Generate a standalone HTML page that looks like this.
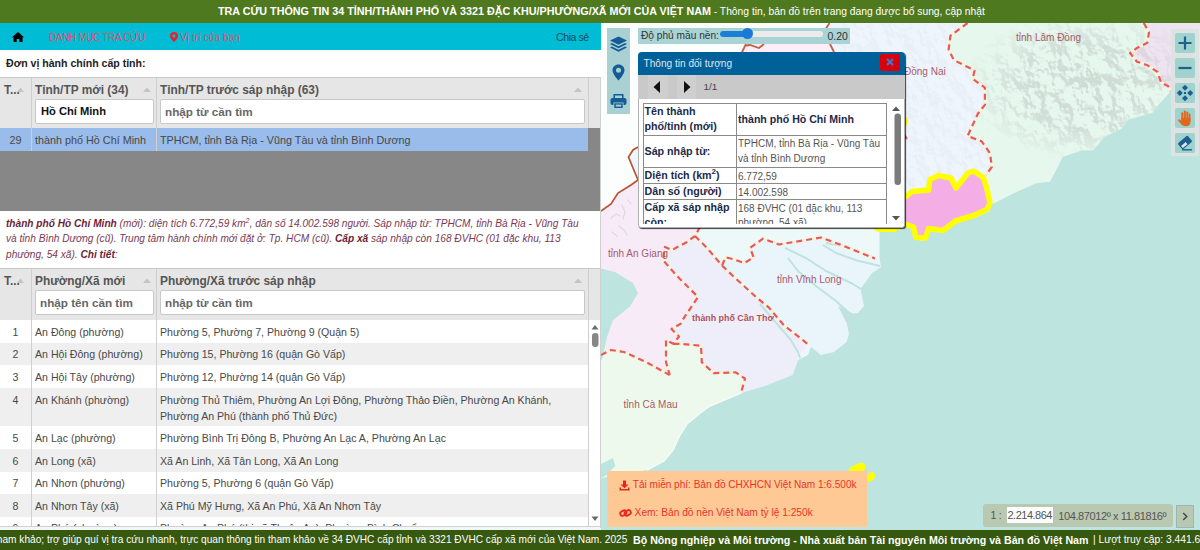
<!DOCTYPE html>
<html><head><meta charset="utf-8">
<style>
*{box-sizing:border-box;margin:0;padding:0}
html,body{width:1200px;height:550px;overflow:hidden;background:#fff;font-family:"Liberation Sans",sans-serif;font-size:13px;color:#333}
.a{position:absolute;white-space:nowrap}
#hdr{left:0;top:0;width:1200px;height:23px;background:#4f791e;color:#fff;font-size:10.3px;line-height:23px;padding-left:218px}
#hdr b{font-size:10.75px}
#nav{left:0;top:23px;width:601px;height:27px;background:#00bcd5}
.nv{top:24px;line-height:27px;color:#e64c6a}
.th{background:#e6e6e6}
.inp{background:#fff;border:1px solid #c8c8c8;border-radius:2px;height:25px;line-height:23px;padding-left:4px;font-weight:bold;font-size:11.7px;color:#666}
.hd{font-weight:bold;color:#555;font-size:11.9px;line-height:16px}
.cell{font-size:10.6px;color:#484848;line-height:16px}
#ftr{left:0;top:530px;width:1200px;height:20px;background:#37580f;color:#fff;line-height:20px;overflow:hidden}
.desc{left:6px;font-size:10.15px;color:#7a3a55;font-style:italic;line-height:15.3px}
.desc b{color:#6b1f3a}
#map{left:601px;top:23px;width:599px;height:507px;overflow:hidden;background:#eef5fd}
.ptl{font-weight:bold;color:#1c2a4a;font-size:10.7px;line-height:16px}
.pvl{color:#555;font-size:10px;line-height:16px}
.lbl{color:#a85a6a;font-size:10px;line-height:12px}
.tbtn{left:1175px;width:20px;height:20px;background:#a0d3cd;border-radius:2px}

</style></head><body>
<div id="hdr" class="a"><b>TRA CỨU THÔNG TIN 34 TỈNH/THÀNH PHỐ VÀ 3321 ĐẶC KHU/PHƯỜNG/XÃ MỚI CỦA VIỆT NAM</b> - Thông tin, bản đồ trên trang đang được bổ sung, cập nhật</div>
<!-- NAV -->
<div id="nav" class="a"></div>
<svg class="a" style="left:12px;top:32px" width="12" height="10" viewBox="0 0 12 10"><path d="M6 0 L12 5.2 L10.5 5.2 L10.5 10 L7.3 10 L7.3 7 L4.7 7 L4.7 10 L1.5 10 L1.5 5.2 L0 5.2 Z" fill="#000"/></svg>
<div class="a nv" style="left:49px;font-size:10px;letter-spacing:-0.35px">DANH MỤC TRA CỨU</div>
<svg class="a" style="left:170px;top:32px" width="8" height="10" viewBox="0 0 8 10"><path d="M4 0 C1.8 0 0 1.7 0 3.9 C0 6.5 4 10 4 10 C4 10 8 6.5 8 3.9 C8 1.7 6.2 0 4 0 Z M4 2.3 A1.6 1.6 0 1 1 4 5.5 A1.6 1.6 0 1 1 4 2.3 Z" fill="#e8202a" fill-rule="evenodd"/></svg>
<div class="a nv" style="left:180px;font-size:10.2px">Vị trí của bạn</div>
<div class="a nv" style="left:556px;color:#174e5e;font-size:10.6px;letter-spacing:-0.45px">Chia sẻ</div>

<div class="a" style="left:6px;top:55px;font-weight:bold;font-size:10.57px;color:#222;line-height:16px">Đơn vị hành chính cấp tỉnh:</div>

<!-- TABLE 1 -->
<div class="a th" style="left:0;top:77px;width:601px;height:51px;border-top:1px solid #c8c8c8"></div>
<div class="a" style="left:0;top:128px;width:588px;height:23px;background:#99bcea"></div>
<div class="a" style="left:31px;top:78px;width:1px;height:73px;background:#cfcfcf"></div>
<div class="a" style="left:156px;top:78px;width:1px;height:73px;background:#cfcfcf"></div>
<div class="a" style="left:588px;top:78px;width:1px;height:50px;background:#cfcfcf"></div>
<div class="a hd" style="left:4px;top:82px">T...</div>
<svg class="a" style="left:17px;top:86.5px" width="7" height="5" viewBox="0 0 7 5"><path d="M0 5 L3.5 0.5 L7 5 Z" fill="#c4c4c4"/></svg>
<svg class="a" style="left:142.5px;top:86.5px" width="8" height="5" viewBox="0 0 8 5"><path d="M0 5 L4 0.5 L8 5 Z" fill="#c4c4c4"/></svg>
<svg class="a" style="left:573.5px;top:86.5px" width="8" height="5" viewBox="0 0 8 5"><path d="M0 5 L4 0.5 L8 5 Z" fill="#c4c4c4"/></svg>

<div class="a hd" style="left:35px;top:82px">Tỉnh/TP mới (34)</div>
<div class="a hd" style="left:160px;top:82px">Tỉnh/TP trước sáp nhập (63)</div>
<div class="a inp" style="left:35px;top:99px;width:119px;color:#111;font-size:11.15px;padding-left:5px">Hồ Chí Minh</div>
<div class="a inp" style="left:160px;top:99px;width:425px">nhập từ cần tìm</div>
<div class="a cell" style="left:0;top:132px;width:31px;text-align:center;font-size:10.8px">29</div>
<div class="a cell" style="left:35px;top:132px;font-size:10.8px">thành phố Hồ Chí Minh</div>
<div class="a cell" style="left:160px;top:132px;font-size:10.8px">TPHCM, tỉnh Bà Rịa - Vũng Tàu và tỉnh Bình Dương</div>
<div class="a" style="left:0;top:151px;width:601px;height:60px;background:#878787"></div>
<div class="a" style="left:588px;top:128px;width:13px;height:23px;background:#878787"></div>

<!-- DESCRIPTION -->
<div class="a desc" style="top:216px"><b>thành phố Hồ Chí Minh</b> (mới): diện tích 6.772,59 km<sup style="font-size:7px;line-height:0">2</sup>, dân số 14.002.598 người. Sáp nhập từ: TPHCM, tỉnh Bà Rịa - Vũng Tàu<br>và tỉnh Bình Dương (cũ). Trung tâm hành chính mới đặt ở: Tp. HCM (cũ). <b>Cấp xã</b> sáp nhập còn 168 ĐVHC (01 đặc khu, 113<br>phường, 54 xã). <b>Chi tiết</b>:</div>

<!-- TABLE 2 -->
<div class="a th" style="left:0;top:268px;width:601px;height:52px;border-top:1px solid #c8c8c8"></div>
<div class="a hd" style="left:4px;top:273px">T...</div>
<svg class="a" style="left:17px;top:277.5px" width="7" height="5" viewBox="0 0 7 5"><path d="M0 5 L3.5 0.5 L7 5 Z" fill="#c4c4c4"/></svg>
<svg class="a" style="left:142.5px;top:277.5px" width="8" height="5" viewBox="0 0 8 5"><path d="M0 5 L4 0.5 L8 5 Z" fill="#c4c4c4"/></svg>
<svg class="a" style="left:573.5px;top:277.5px" width="8" height="5" viewBox="0 0 8 5"><path d="M0 5 L4 0.5 L8 5 Z" fill="#c4c4c4"/></svg>

<div class="a hd" style="left:35px;top:273px">Phường/Xã mới</div>
<div class="a hd" style="left:160px;top:273px">Phường/Xã trước sáp nhập</div>
<div class="a inp" style="left:35px;top:290px;width:119px">nhập tên cần tìm</div>
<div class="a inp" style="left:160px;top:290px;width:425px">nhập từ cần tìm</div>
<div class="a" style="left:0;top:320px;width:601px;height:206px;overflow:hidden">
<div class="a" style="left:0;top:-320px;width:601px;height:600px">
<div class="a" style="left:0;top:320.00px;width:588px;height:23.05px;background:#fff"></div>
<div class="a cell" style="left:0;top:323.60px;width:31px;text-align:center">1</div>
<div class="a cell" style="left:35px;top:323.60px">An Đông (phường)</div>
<div class="a cell" style="left:160px;top:323.60px">Phường 5, Phường 7, Phường 9 (Quận 5)</div>
<div class="a" style="left:0;top:342.65px;width:588px;height:23.05px;background:#efefef"></div>
<div class="a cell" style="left:0;top:346.25px;width:31px;text-align:center">2</div>
<div class="a cell" style="left:35px;top:346.25px">An Hội Đông (phường)</div>
<div class="a cell" style="left:160px;top:346.25px">Phường 15, Phường 16 (quận Gò Vấp)</div>
<div class="a" style="left:0;top:365.30px;width:588px;height:23.05px;background:#fff"></div>
<div class="a cell" style="left:0;top:368.90px;width:31px;text-align:center">3</div>
<div class="a cell" style="left:35px;top:368.90px">An Hội Tây (phường)</div>
<div class="a cell" style="left:160px;top:368.90px">Phường 12, Phường 14 (quận Gò Vấp)</div>
<div class="a" style="left:0;top:387.95px;width:588px;height:38.70px;background:#efefef"></div>
<div class="a cell" style="left:0;top:391.55px;width:31px;text-align:center">4</div>
<div class="a cell" style="left:35px;top:391.55px">An Khánh (phường)</div>
<div class="a cell" style="left:160px;top:391.55px">Phường Thủ Thiêm, Phường An Lợi Đông, Phường Thảo Điền, Phường An Khánh,<br>Phường An Phú (thành phố Thủ Đức)</div>
<div class="a" style="left:0;top:426.25px;width:588px;height:23.05px;background:#fff"></div>
<div class="a cell" style="left:0;top:429.85px;width:31px;text-align:center">5</div>
<div class="a cell" style="left:35px;top:429.85px">An Lạc (phường)</div>
<div class="a cell" style="left:160px;top:429.85px">Phường Bình Trị Đông B, Phường An Lạc A, Phường An Lạc</div>
<div class="a" style="left:0;top:448.90px;width:588px;height:23.05px;background:#efefef"></div>
<div class="a cell" style="left:0;top:452.50px;width:31px;text-align:center">6</div>
<div class="a cell" style="left:35px;top:452.50px">An Long (xã)</div>
<div class="a cell" style="left:160px;top:452.50px">Xã An Linh, Xã Tân Long, Xã An Long</div>
<div class="a" style="left:0;top:471.55px;width:588px;height:23.05px;background:#fff"></div>
<div class="a cell" style="left:0;top:475.15px;width:31px;text-align:center">7</div>
<div class="a cell" style="left:35px;top:475.15px">An Nhơn (phường)</div>
<div class="a cell" style="left:160px;top:475.15px">Phường 5, Phường 6 (quận Gò Vấp)</div>
<div class="a" style="left:0;top:494.20px;width:588px;height:23.05px;background:#efefef"></div>
<div class="a cell" style="left:0;top:497.80px;width:31px;text-align:center">8</div>
<div class="a cell" style="left:35px;top:497.80px">An Nhơn Tây (xã)</div>
<div class="a cell" style="left:160px;top:497.80px">Xã Phú Mỹ Hưng, Xã An Phú, Xã An Nhơn Tây</div>
<div class="a" style="left:0;top:516.85px;width:588px;height:23.05px;background:#fff"></div>
<div class="a cell" style="left:0;top:520.45px;width:31px;text-align:center">9</div>
<div class="a cell" style="left:35px;top:520.45px">An Phú (phường)</div>
<div class="a cell" style="left:160px;top:520.45px">Phường An Phú (thị xã Thuận An), Phường Bình Chuẩn</div>
</div></div>
<div class="a" style="left:31px;top:269px;width:1px;height:258px;background:#cfcfcf"></div>
<div class="a" style="left:156px;top:269px;width:1px;height:258px;background:#cfcfcf"></div>
<div class="a" style="left:588px;top:269px;width:1px;height:258px;background:#cfcfcf"></div>
<div class="a" style="left:589px;top:320px;width:12px;height:206px;background:#fff"></div>
<svg class="a" style="left:589px;top:319px" width="12" height="208" viewBox="0 0 12 208">
<path d="M2.5 10.5 L6 6 L9.5 10.5 Z" fill="#6a6a6a"/>
<rect x="3" y="14" width="6.5" height="14" rx="3" fill="#878787"/>
<path d="M2.5 197.5 L6 202 L9.5 197.5 Z" fill="#6a6a6a"/>
</svg>
<div class="a" style="left:0;top:526px;width:601px;height:1px;background:#d0d0d0"></div>
<div class="a" style="left:0;top:527px;width:601px;height:3px;background:#f1f7fb"></div>
<div class="a" style="left:600px;top:77px;width:1px;height:451px;background:#d0d0d0"></div>

<!-- MAP -->
<div id="map" class="a">
<svg width="599" height="507" viewBox="601 23 599 507" style="position:absolute;left:0;top:0">
<defs>
<filter id="hs" x="940" y="23" width="260" height="200" filterUnits="userSpaceOnUse">
<feTurbulence type="fractalNoise" baseFrequency="0.07 0.05" numOctaves="4" seed="11" result="n"/>
<feDiffuseLighting in="n" surfaceScale="9" diffuseConstant="1" lighting-color="#ffffff" result="l"><feDistantLight azimuth="300" elevation="40"/></feDiffuseLighting>
<feColorMatrix in="l" type="matrix" values="0 0 0 0 0.52  0 0 0 0 0.58  0 0 0 0 0.55  -2.3 0 0 0 1.6" result="c"/>
<feComposite in="c" in2="SourceGraphic" operator="in"/>
</filter>
<filter id="hs2" x="830" y="23" width="170" height="170" filterUnits="userSpaceOnUse">
<feTurbulence type="fractalNoise" baseFrequency="0.09 0.06" numOctaves="4" seed="5" result="n"/>
<feDiffuseLighting in="n" surfaceScale="7" diffuseConstant="1" lighting-color="#ffffff" result="l"><feDistantLight azimuth="300" elevation="40"/></feDiffuseLighting>
<feColorMatrix in="l" type="matrix" values="0 0 0 0 0.55  0 0 0 0 0.58  0 0 0 0 0.62  -2.3 0 0 0 1.6" result="c"/>
<feComposite in="c" in2="SourceGraphic" operator="in"/>
</filter>
</defs>
<rect x="601" y="23" width="599" height="505" fill="#eef5fd"/>
<!-- Cambodia -->
<path d="M601,23 L829.5,23 L826,28.5 L830,44 L746,44 L742,52 L638,52 L638,147 L633,150 L628.5,157 L633,168 L638,180 L631,185 L618,193 L611,204 L601,211 Z" fill="#fcfdfd"/>
<!-- Tay Ninh top -->
<path d="M742,52 L746,44 L830,44 L834,52 Z" fill="#fbeef9"/>
<!-- An Giang -->
<path d="M601,211 L611,204 L618,193 L631,185 L638,180 L638,227 L700,227 L695,236 L687,242 L672,250 L665,247 L663,260 L677,276 L698,297 L682.5,320 L680.7,323.7 L671.5,329 L679,336.5 L673.4,343.8 L666,340 L666,362 L669.7,375 L646,362 L624,352 L611,350 L601,355 Z" fill="#f8ebf8"/>
<!-- Can Tho -->
<path d="M695,236 L707,248 L723,265.5 L733,276 L756,297 L769,307.6 L783.6,325 L807,345.5 L798,357 L794.5,369.5 L792.6,375 L765,386 L741,393 L745,378.7 L735.8,372.3 L713.7,373.2 L701.8,362.2 L701,345.7 L680.7,343.8 L673.4,343.8 L679,336.5 L671.5,329 L680.7,323.7 L682.5,320 L698,297 L677,276 L663,260 L665,247 L672,250 L687,242 Z" fill="#eeeefa"/>
<!-- Dong Thap -->
<path d="M700,227 L880,227 L879.6,229 L876.7,258 L875,258.5 L840,244.5 L821,237.5 L779,244.5 L763,238.7 L750,248 L753.7,257.3 L744.3,263 L735,259.7 L725.7,257.3 L722,265.5 L707,248 L695,236 Z" fill="#edf8f9"/>
<!-- Vinh Long -->
<path d="M722,265.5 L725.7,257.3 L735,259.7 L744.3,263 L753.7,257.3 L750,248 L763,238.7 L779,244.5 L821,237.5 L840,244.5 L875,258.5 L879.6,258 L881,267 L872,273 L867,280 L860.5,289 L864,306 L858,313 L849,314 L846.5,322 L849,334 L846.5,342 L834,352 L821,355 L811,347 L808,344.6 L783.6,325 L769,307.6 L756,297 L733,276 Z" fill="#e9f5fb"/>
<!-- Ca Mau -->
<path d="M601,355 L611,350 L624,352 L646,362 L669.7,375 L666,362 L666,340 L673.4,343.8 L680.7,343.8 L701,345.7 L701.8,362.2 L713.7,373.2 L735.8,372.3 L745,378.7 L741,393 L732,400 L710,406 L699,414 L687,424 L680,435 L673,450 L664,461 L647,470 L620,475 L601,478 Z" fill="#eef9ed"/>
<!-- Lam Dong -->
<path d="M967.6,23 L1143.8,23 L1149,32.4 L1147.3,42.7 L1137,48 L1130,53 L1137,61.7 L1147.3,65.2 L1157.6,72 L1161,82.4 L1168,86 L1171,91 L1158.8,104.4 L1152.3,113.1 L1128.3,119.6 L1121.8,128.4 L1104.3,137.1 L1093.4,150.2 L1082.5,150.2 L1062.9,156.7 L1056.3,169.8 L1049.8,181.8 L1036.7,182.9 L1012.7,193.8 L991,204.7 L989,186 L986,175 L991.8,167 L990,153.3 L981.5,141.2 L967.6,136 L978,113.5 L984.9,104.9 L984.9,87.6 L972.8,79 L974.5,70.4 L967.6,67 L953.8,60 L948.6,49.6 L950.4,35.8 Z" fill="#e6f8ee"/>
<!-- Khanh Hoa -->
<path d="M1143.8,23 L1200,23 L1200,82 L1171,91 L1168,86 L1161,82.4 L1157.6,72 L1147.3,65.2 L1137,61.7 L1130,53 L1137,48 L1147.3,42.7 L1149,32.4 Z" fill="#eee3f1"/>
<!-- hillshade -->
<defs>
<radialGradient id="hg" cx="1085" cy="85" r="125" gradientUnits="userSpaceOnUse" gradientTransform="translate(1075 88) scale(1 0.62) translate(-1075 -88)">
<stop offset="0" stop-color="#fff" stop-opacity="1"/>
<stop offset="0.55" stop-color="#fff" stop-opacity="0.85"/>
<stop offset="1" stop-color="#fff" stop-opacity="0"/>
</radialGradient>
<mask id="hm" maskUnits="userSpaceOnUse" x="940" y="23" width="260" height="200"><rect x="940" y="23" width="260" height="200" fill="url(#hg)"/></mask>
</defs>
<g mask="url(#hm)" opacity="0.6">
<path d="M967.6,23 L1200,23 L1200,82 L1171,91 L1158.8,104.4 L1152.3,113.1 L1128.3,119.6 L1121.8,128.4 L1104.3,137.1 L1093.4,150.2 L1082.5,150.2 L1062.9,156.7 L1056.3,169.8 L1049.8,181.8 L1036.7,182.9 L1012.7,193.8 L991,204.7 L989,186 L986,175 L991.8,167 L990,153.3 L981.5,141.2 L967.6,136 L978,113.5 L984.9,104.9 L984.9,87.6 L972.8,79 L974.5,70.4 L967.6,67 L953.8,60 L948.6,49.6 L950.4,35.8 Z" filter="url(#hs)" fill="#000"/>
</g>
<g opacity="0.12">
<path d="M834,23 L967.6,23 L950.4,35.8 L948.6,49.6 L953.8,60 L967.6,67 L974.5,70.4 L972.8,79 L984.9,87.6 L984.9,104.9 L978,113.5 L967.6,136 L981.5,141.2 L990,153.3 L991.8,167 L986,175 L960,180 L905,190 L905,52 L834,52 Z" filter="url(#hs2)" fill="#000"/>
</g>
<!-- Sea -->
<path d="M601,478 L620,475 L647,470 L664,461 L673,450 L680,435 L687,424 L699,414 L710,406 L741,393 L765,386 L792.6,375 L798,360 L808,355 L811,347 L821,355 L834,352 L846.5,342 L849,334 L846.5,322 L849,314 L858,313 L864,306 L860.5,289 L867,280 L872,273 L881,267 L879.6,258 L879.6,229 L900,227 L905,224 L914,228 L916,239 L923,241 L927,230 L943,233 L956,223 L974,218 L989,212 L991,204.7 L1012.7,193.8 L1036.7,182.9 L1049.8,181.8 L1056.3,169.8 L1062.9,156.7 L1082.5,150.2 L1093.4,150.2 L1104.3,137.1 L1121.8,128.4 L1128.3,119.6 L1152.3,113.1 L1158.8,104.4 L1171,91 L1200,82 L1200,530 L601,530 Z" fill="#bde4df"/>
<path d="M601,268.5 L615,272 L633,283 L638,293 L630,306.5 L613,320 L607,337 L602.5,358 L601,360 Z" fill="#bde4df"/>
<path d="M601,464 L613,458 L615.4,466 L605,476 L601,478 Z" fill="#bde4df"/>
<!-- coast white rim -->
<path d="M647,470 L664,461 L673,450 L680,435 L687,424 L699,414 L710,406 L741,393" fill="none" stroke="#f6fbf8" stroke-width="1.5"/>
<!-- Vinh Long channels -->
<g fill="none" stroke="#bfe2e0" stroke-width="2" stroke-linejoin="round">
<path d="M785,248 L806,258 L826,271 L852,283.5 L861,289"/>
<path d="M788,258 L798,271 L816,286 L836,301 L849,313"/>
<path d="M823,245 L836,253 L857,260.5 L880,266"/>
<path d="M760,304 L775,321.7 L790.5,339.5 L798,352 L800,358"/>
<path d="M826,243 L849,247"/>
</g>
<path d="M838,306 L852,313 L856,321 L846,322 Z" fill="#bfe2e0"/>
<!-- HCM -->
<path d="M880,212 L906,196.5 L912,191.5 L928.5,190 L930,179.5 L938.5,175.5 L951,178 L956,188 L968,173 L973.5,171 L983.5,177.5 L986.5,187.5 L990,202.5 L987,209.5 L973.5,215.5 L955.5,221 L943,230.5 L928.5,228.5 L925.5,238 L916,237.5 L913.5,227 L905,224 L893,229.5 L878,229 L870,222 Z" fill="#f5ade6" stroke="#ffff00" stroke-width="5.5" stroke-linejoin="round"/>
<path d="M903,117 C907,116 908.5,119 908,122 C907.5,125 906,127 903,127 Z" fill="#ffff00"/>
<path d="M904,134 L907,139" stroke="#e65f62" stroke-width="2"/>
<g fill="none" stroke="#e0d6e2" stroke-width="1.2" stroke-linecap="round">
<path d="M611,218 L616,214 L620,216"/><path d="M622,205 L625,212 L623,219"/><path d="M619,226 L624,230 L627,235"/><path d="M612,232 L617,236"/><path d="M628,200 L631,204"/>
</g>
<!-- Con Dao -->
<g fill="#ffff00">
<path d="M848.5,472 C848.5,467.5 852.5,465.5 856.5,464.8 C858.5,462.5 863.5,461.8 865,465 C866.2,468.5 864,472 860,472 Z"/>
<path d="M867.3,480 C866.8,476 868.8,472.3 871.8,472 C875,471.8 875.8,475.8 874.3,478 C872.8,480.2 871.3,482 868.5,481.7 Z"/>
</g>
<!-- province boundaries -->
<g fill="none" stroke-linejoin="round" stroke-linecap="butt">
<g stroke="#f5f3d8" stroke-width="3">
<path id="b1" d="M967.6,23 L950.4,35.8 L948.6,49.6 L953.8,60 L967.6,67 L974.5,70.4 L972.8,79 L984.9,87.6 L984.9,104.9 L978,113.5 L967.6,136 L981.5,141.2 L990,153.3 L991.8,167 L986,175"/>
<path id="b2" d="M1143.8,23 L1149,32.4 L1147.3,42.7 L1137,48 L1130,53 L1137,61.7 L1147.3,65.2 L1157.6,72 L1161,82.4 L1168,86 L1171,91"/>
<path id="b3" d="M700,227 L695,236 L687,242 L672,250 L665,247 L663,260 L677,276 L698,297 L682.5,320 L680.7,323.7 L671.5,329 L679,336.5 L673.4,343.8 L666,340 L666,362 L669.7,375"/>
<path id="b4" d="M601,355 L611,350 L624,352 L646,362 L669.7,375"/>
<path id="b5" d="M673.4,343.8 L680.7,343.8 L701,345.7 L701.8,362.2 L713.7,373.2 L735.8,372.3 L745,378.7 L741,393"/>
<path id="b6" d="M695,236 L707,248 L722,265.5 L733,276 L756,297 L769,307.6 L783.6,325 L795.6,334.4 L808.3,344.6"/>
<path id="b7" d="M722,265.5 L725.7,257.3 L735,259.7 L744.3,263 L753.7,257.3 L750,248 L763,238.7 L779,244.5 L821,237.5 L840,244.5 L875,258.5"/>
</g>
<g stroke="#e8595e" stroke-width="2.2" stroke-dasharray="6 4">
<use href="#b1"/><use href="#b2"/><use href="#b3"/><use href="#b4"/><use href="#b5"/><use href="#b6"/><use href="#b7"/>
</g>
</g>
<!-- country border -->
<path d="M601,211 L611,204 L618,193 L631,185 L638,180 L633,168 L628.5,157 L633,150 L638,147" fill="none" stroke="#b8532e" stroke-width="1.7"/>
<path d="M742,52 L746,44 M746,45.5 L750,45 L759,48 L764,44 M829.5,23 L826,28.5 M830,44 L834,52" fill="none" stroke="#c0603e" stroke-width="1.8"/>
</svg>
<div class="a lbl" style="left:415px;top:9px">tỉnh Lâm Đồng</div>
<div class="a lbl" style="left:303px;top:43px">Đồng Nai</div>
<div class="a lbl" style="left:7px;top:225px">tỉnh An Giang</div>
<div class="a lbl" style="left:176px;top:251px">tỉnh Vĩnh Long</div>
<div class="a lbl" style="left:91px;top:289px;font-weight:bold;font-size:8.9px;color:#b0525a">thành phố Cần Thơ</div>
<div class="a lbl" style="left:22.6px;top:376px">tỉnh Cà Mau</div>

</div>

<!-- LEFT MAP TOOLBAR -->
<div class="a" style="left:607px;top:28px;width:23px;height:86px;background:#a9d0d2"></div>
<svg class="a" style="left:609px;top:36px" width="19" height="17" viewBox="0 0 19 17">
<path d="M9.5 0.5 L18 4.6 L9.5 8.7 L1 4.6 Z" fill="#135c94"/>
<path d="M1 8 L3 7 L9.5 10.2 L16 7 L18 8 L9.5 12.2 Z" fill="#135c94"/>
<path d="M1 11.6 L3 10.6 L9.5 13.8 L16 10.6 L18 11.6 L9.5 15.8 Z" fill="#135c94"/>
</svg>
<svg class="a" style="left:612px;top:63.5px" width="13" height="17" viewBox="0 0 13 17"><path d="M6.5 0.5 C3 0.5 0.5 3 0.5 6.3 C0.5 10.5 6.5 16.5 6.5 16.5 C6.5 16.5 12.5 10.5 12.5 6.3 C12.5 3 10 0.5 6.5 0.5 Z M6.5 3.8 A2.5 2.5 0 1 1 6.5 8.8 A2.5 2.5 0 1 1 6.5 3.8 Z" fill="#135c94" fill-rule="evenodd"/></svg>
<svg class="a" style="left:610px;top:93px" width="17" height="16" viewBox="0 0 17 16">
<path d="M3.5 5 V1 H13.5 V5 H12 V2.5 H5 V5 Z" fill="#135c94"/>
<rect x="0.5" y="5" width="16" height="7" rx="2" fill="#135c94"/>
<rect x="3.5" y="9.5" width="10" height="6" fill="#a9d0d2"/>
<path d="M4.3 10.3 H12.7 V15 H4.3 Z" fill="#135c94"/>
<rect x="5.8" y="11.6" width="5.4" height="2" fill="#a9d0d2"/>
</svg>

<!-- SLIDER -->
<div class="a" style="left:638px;top:28px;width:212px;height:16px;background:#a9d3d4"></div>
<div class="a" style="left:641px;top:28px;line-height:16px;font-size:10.17px;color:#333">Độ phủ mầu nền:</div>
<div class="a" style="left:720px;top:31px;width:102.5px;height:5.5px;border-radius:3px;background:#ebebeb"></div>
<div class="a" style="left:720px;top:31px;width:27px;height:5.5px;border-radius:3px;background:#1c7fd6"></div>
<div class="a" style="left:741.5px;top:28px;width:11px;height:11px;border-radius:6px;background:#1a7ad8"></div>
<div class="a" style="left:827.5px;top:28px;line-height:16px;font-size:10.5px;color:#333;font-family:'Liberation Sans'">0.20</div>

<!-- POPUP -->
<div class="a" style="left:638px;top:52px;width:267px;height:176px;background:#fff;border:1px solid #b0b0b0;border-radius:4px 4px 3px 3px;box-shadow:1px 1px 1px rgba(0,0,0,0.75)"></div>
<div class="a" style="left:638px;top:52px;width:267px;height:23px;background:#00609a;border-radius:4px 4px 0 0"></div>
<div class="a" style="left:643.5px;top:52px;line-height:23px;font-size:10.1px;color:#dfe7f0">Thông tin đối tượng</div>
<div class="a" style="left:880px;top:54px;width:20px;height:17px;background:#d9000e;border-radius:2px"></div>
<svg class="a" style="left:885px;top:57px" width="10" height="10" viewBox="0 0 10 10"><path d="M2 2 L8 8 M8 2 L2 8" stroke="#3f78c6" stroke-width="2.2"/></svg>
<div class="a" style="left:638px;top:75px;width:267px;height:24px;background:#c9c9c9"></div>
<div class="a" style="left:647.5px;top:75px;width:20px;height:24px;background:#cfcfcf"></div>
<div class="a" style="left:677px;top:75px;width:19px;height:24px;background:#cfcfcf"></div>
<svg class="a" style="left:652px;top:80px" width="10" height="14" viewBox="0 0 10 14"><path d="M8 1 L1.5 7 L8 13 Z" fill="#111"/></svg>
<svg class="a" style="left:682px;top:80px" width="10" height="14" viewBox="0 0 10 14"><path d="M2 1 L8.5 7 L2 13 Z" fill="#111"/></svg>
<div class="a" style="left:703.5px;top:75px;line-height:24px;font-size:9.9px;color:#444">1/1</div>
<div class="a" style="left:642.5px;top:102.5px;width:244.5px;height:121.5px;overflow:hidden">
<div class="a" style="left:0;top:0;width:244.5px;height:200px;border:1px solid #8a8a8a;border-bottom:0"></div>
<div class="a" style="left:93.5px;top:0;width:1px;height:200px;background:#8a8a8a"></div>
<div class="a" style="left:0;top:32px;width:244.5px;height:1px;background:#8a8a8a"></div>
<div class="a" style="left:0;top:64px;width:244.5px;height:1px;background:#8a8a8a"></div>
<div class="a" style="left:0;top:80.5px;width:244.5px;height:1px;background:#8a8a8a"></div>
<div class="a" style="left:0;top:96.5px;width:244.5px;height:1px;background:#8a8a8a"></div>
<div class="a ptl" style="left:2px;top:1.5px;line-height:14.8px">Tên thành<br>phố/tỉnh (mới)</div>
<div class="a ptl" style="left:95.5px;top:9px;line-height:14.8px;font-size:10.6px">thành phố Hồ Chí Minh</div>
<div class="a ptl" style="left:2px;top:41px;line-height:14.8px">Sáp nhập từ:</div>
<div class="a pvl" style="left:95.5px;top:34.5px;line-height:14.8px">TPHCM, tỉnh Bà Rịa - Vũng Tàu<br>và tỉnh Bình Dương</div>
<div class="a ptl" style="left:2px;top:65.5px;line-height:14.8px">Diện tích (km<sup style="font-size:8px;line-height:0">2</sup>)</div>
<div class="a pvl" style="left:95.5px;top:67.0px;line-height:14.8px">6.772,59</div>
<div class="a ptl" style="left:2px;top:81.5px;line-height:14.8px">Dân số (người)</div>
<div class="a pvl" style="left:95.5px;top:83.0px;line-height:14.8px">14.002.598</div>
<div class="a ptl" style="left:2px;top:97.5px;line-height:14.8px">Cấp xã sáp nhập<br>còn:</div>
<div class="a pvl" style="left:95.5px;top:99.0px;line-height:14.8px">168 ĐVHC (01 đặc khu, 113<br>phường, 54 xã)</div>
</div>
<!-- popup scrollbar -->
<svg class="a" style="left:889px;top:103px" width="14" height="122" viewBox="0 0 14 122">
<path d="M3 8 L7 3.5 L11 8 Z" fill="#555"/>
<rect x="5.5" y="10.5" width="6.5" height="71.5" rx="3.2" fill="#7b7b7b"/>
<path d="M3 113 L7 117.5 L11 113 Z" fill="#555"/>
</svg>

<!-- RIGHT TOOLBAR -->
<div class="a" style="left:1170.5px;top:28.5px;width:28.5px;height:127px;background:#dde3e3"></div>
<div class="a tbtn" style="top:32.5px"></div>
<div class="a tbtn" style="top:57.5px"></div>
<div class="a tbtn" style="top:82.5px"></div>
<div class="a tbtn" style="top:108px"></div>
<div class="a tbtn" style="top:132.5px"></div>
<svg class="a" style="left:1175px;top:32.5px" width="20" height="20" viewBox="0 0 20 20"><path d="M10 3.5 V16.5 M3.5 10 H16.5" stroke="#1d5f8e" stroke-width="2.2"/></svg>
<svg class="a" style="left:1175px;top:57.5px" width="20" height="20" viewBox="0 0 20 20"><path d="M3.5 10 H16.5" stroke="#1d5f8e" stroke-width="2.2"/></svg>
<svg class="a" style="left:1175px;top:82.5px" width="20" height="20" viewBox="0 0 20 20"><g fill="#1b5f92"><path d="M10 1.8 L13 4.8 L10 7.8 L7 4.8 Z"/><path d="M10 12.2 L13 15.2 L10 18.2 L7 15.2 Z"/><path d="M1.8 10 L4.8 7 L7.8 10 L4.8 13 Z"/><path d="M12.2 10 L15.2 7 L18.2 10 L15.2 13 Z"/><rect x="9" y="9" width="2" height="2"/></g></svg>
<svg class="a" style="left:1175px;top:108px" width="20" height="20" viewBox="0 0 20 20"><g fill="#e2671c"><rect x="6.3" y="4.2" width="2" height="9" rx="1"/><rect x="8.8" y="2.6" width="2" height="10" rx="1"/><rect x="11.3" y="3.4" width="2" height="9" rx="1"/><rect x="13.6" y="5.6" width="1.9" height="8" rx="0.95"/><path d="M6.3 10 L15.5 10 L15.5 13.5 C15.5 16.8 13.5 18.3 10.8 18.3 C8.3 18.3 7 17.3 5.8 15.8 L3.2 12.6 C2.6 11.7 3.6 10.8 4.5 11.4 L6.3 12.8 Z"/></g></svg>
<svg class="a" style="left:1175px;top:132.5px" width="20" height="20" viewBox="0 0 20 20"><g transform="rotate(-40 10 9.5)"><rect x="3.5" y="5.5" width="13" height="8" rx="1.5" fill="#1d5f8e"/><rect x="4.8" y="9.6" width="6" height="2.7" fill="#d8ecee"/></g><path d="M7 16.8 H17" stroke="#1d5f8e" stroke-width="1.4"/></svg>

<!-- ORANGE BOX -->
<div class="a" style="left:607px;top:471px;width:260px;height:55.5px;background:#ffc996"></div>
<svg class="a" style="left:618.5px;top:479.5px" width="11" height="11" viewBox="0 0 11 11"><path d="M4 0.5 H7 V4.5 H9.5 L5.5 8.2 L1.5 4.5 H4 Z" fill="#e8261c"/><path d="M0.5 7.5 V10.5 H10.5 V7.5 H9 V9 H2 V7.5 Z" fill="#e8261c"/></svg>
<div class="a" style="left:632.8px;top:477px;line-height:15px;font-size:10.05px;color:#e8332a">Tải miễn phí: Bản đồ CHXHCN Việt Nam 1:6.500k</div>
<svg class="a" style="left:618.5px;top:507.5px" width="13" height="10" viewBox="0 0 13 10"><g fill="none" stroke="#e8261c" stroke-width="1.8"><rect x="1" y="3" width="6.5" height="4.5" rx="2.2" transform="rotate(-30 4 5)"/><rect x="5.5" y="2.5" width="6.5" height="4.5" rx="2.2" transform="rotate(-30 9 5)"/></g></svg>
<div class="a" style="left:634.6px;top:504.5px;line-height:15px;font-size:10.2px;color:#e8332a">Xem: Bản đồ nền Việt Nam tỷ lệ 1:250k</div>

<!-- SCALE -->
<div class="a" style="left:983px;top:504px;width:190px;height:23px;background:#b9c8b1;border-radius:3px"></div>
<div class="a" style="left:990.5px;top:504px;line-height:23px;font-size:10.5px;color:#555;letter-spacing:-0.3px">1 :</div>
<div class="a" style="left:1006.5px;top:507px;width:46px;height:16px;background:#fbfdfc"></div>
<div class="a" style="left:1007.5px;top:504px;line-height:23px;font-size:11px;color:#555;letter-spacing:-0.5px">2.214.864</div>
<div class="a" style="left:1058.3px;top:505px;line-height:23px;font-size:11px;color:#555;letter-spacing:-0.4px">104.87012º x 11.81816º</div>
<div class="a" style="left:1175.5px;top:504.5px;width:18px;height:23px;background:#b9c8b1;border:1px solid #9fb5b5"></div>
<svg class="a" style="left:1180.5px;top:511.5px" width="8" height="9" viewBox="0 0 8 9"><path d="M2.2 1 L5.8 4.5 L2.2 8" fill="none" stroke="#444" stroke-width="1.4"/></svg>

<!-- FOOTER -->
<div id="ftr" class="a">
<span class="a" style="left:-6px;top:0;font-size:10.15px">tham khảo; trợ giúp quí vị tra cứu nhanh, trực quan thông tin tham khảo về 34 ĐVHC cấp tỉnh và 3321 ĐVHC cấp xã mới của Việt Nam. 2025</span>
<span class="a" style="left:633px;top:0;font-size:10.67px;font-weight:bold">Bộ Nông nghiệp và Môi trường - Nhà xuất bản Tài nguyên Môi trường và Bản đồ Việt Nam</span>
<span class="a" style="left:1093px;top:0;font-size:10.3px">| Lượt truy cập: 3.441.689</span>
</div>

</body></html>
